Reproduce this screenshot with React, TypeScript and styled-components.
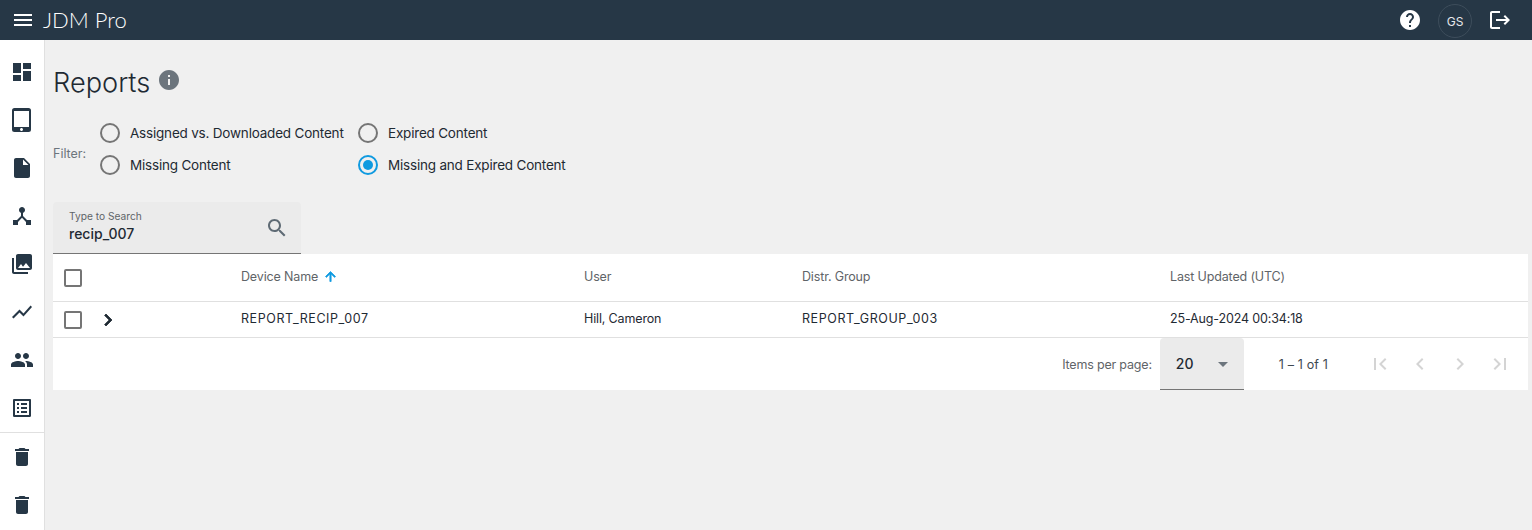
import React from "react";
import styled, { createGlobalStyle } from "styled-components";

const Global = createGlobalStyle`
  html, body { margin: 0; padding: 0; height: 100%; background: #f0f0f0; }
  body { font-family: Inter, "Liberation Sans", sans-serif; color: #1f2a33; overflow: hidden; }
  * { box-sizing: border-box; }
`;

const P = {
  menu: "M3 18h18v-2H3v2zm0-5h18v-2H3v2zm0-7v2h18V6H3z",
  dashboard: "M3 13h8V3H3v10zm0 8h8v-6H3v6zm10 0h8V11h-8v10zm0-18v6h8V3h-8z",
  tablet: "M18.5 0h-14A2.5 2.5 0 0 0 2 2.5v19A2.5 2.5 0 0 0 4.5 24h14a2.5 2.5 0 0 0 2.5-2.5v-19A2.5 2.5 0 0 0 18.5 0zm-7 23c-.83 0-1.5-.67-1.5-1.5s.67-1.5 1.5-1.5 1.5.67 1.5 1.5-.67 1.5-1.5 1.5zm7.5-4H4V3h15v16z",
  file: "M6 2c-1.1 0-1.99.9-1.99 2L4 20c0 1.1.89 2 1.99 2H18c1.1 0 2-.9 2-2V8l-6-6H6zm7 7V3.5L18.5 9H13z",
  hub: "M17 16l-4-4V8.82C14.16 8.4 15 7.3 15 6c0-1.66-1.34-3-3-3S9 4.34 9 6c0 1.3.84 2.4 2 2.82V12l-4 4H3v5h5v-3.05l4-4.2 4 4.2V21h5v-5h-4z",
  collections: "M22 16V4c0-1.1-.9-2-2-2H8c-1.1 0-2 .9-2 2v12c0 1.1.9 2 2 2h12c1.1 0 2-.9 2-2zm-11-4l2.03 2.71L16 11l4 5H8l3-4zM2 6v14c0 1.1.9 2 2 2h14v-2H4V6H2z",
  chart: "M3.5 18.49l6-6.01 4 4L22 6.92l-1.41-1.41-7.09 7.97-4-4L2 16.99z",
  people: "M16 11c1.66 0 2.99-1.34 2.99-3S17.66 5 16 5c-1.66 0-3 1.34-3 3s1.34 3 3 3zm-8 0c1.66 0 2.99-1.34 2.99-3S9.66 5 8 5C6.34 5 5 6.34 5 8s1.34 3 3 3zm0 2c-2.33 0-7 1.17-7 3.5V19h14v-2.5c0-2.33-4.67-3.5-7-3.5zm8 0c-.29 0-.62.02-.97.05 1.16.84 1.97 1.97 1.97 3.45V19h6v-2.5c0-2.33-4.67-3.5-7-3.5z",
  list: "M19 5v14H5V5h14m1.1-2H3.9c-.5 0-.9.4-.9.9v16.2c0 .4.4.9.9.9h16.2c.4 0 .9-.5.9-.9V3.9c0-.5-.5-.9-.9-.9zM11 7h6v2h-6V7zm0 4h6v2h-6v-2zm0 4h6v2h-6zM7 7h2v2H7zm0 4h2v2H7zm0 4h2v2H7z",
  trash: "M6 19c0 1.1.9 2 2 2h8c1.1 0 2-.9 2-2V7H6v12zM19 4h-3.5l-1-1h-5l-1 1H5v2h14V4z",
  help: "M12 2C6.48 2 2 6.48 2 12s4.48 10 10 10 10-4.48 10-10S17.52 2 12 2zm1 17h-2v-2h2v2zm2.07-7.75l-.9.92C13.45 12.9 13 13.5 13 15h-2v-.5c0-1.1.45-2.1 1.17-2.83l1.24-1.26c.37-.36.59-.86.59-1.41 0-1.1-.9-2-2-2s-2 .9-2 2H8c0-2.21 1.79-4 4-4s4 1.79 4 4c0 .88-.36 1.68-.93 2.25z",
  logout: "M17 7l-1.41 1.41L18.17 11H8v2h10.17l-2.58 2.58L17 17l5-5zM4 5h8V3H4c-1.1 0-2 .9-2 2v14c0 1.1.9 2 2 2h8v-2H4V5z",
  info: "M12 2C6.48 2 2 6.48 2 12s4.48 10 10 10 10-4.48 10-10S17.52 2 12 2zm1 15h-2v-6h2v6zm0-8h-2V7h2v2z",
  search: "M15.5 14h-.79l-.28-.27C15.41 12.59 16 11.11 16 9.5 16 5.91 13.09 3 9.5 3S3 5.91 3 9.5 5.91 16 9.5 16c1.61 0 3.09-.59 4.23-1.57l.27.28v.79l5 4.99L20.49 19l-4.99-5zm-6 0C7.01 14 5 11.99 5 9.5S7.01 5 9.5 5 14 7.01 14 9.5 11.99 14 9.5 14z",
  up: "M4 12l1.41 1.41L11 7.83V20h2V7.83l5.58 5.59L20 12l-8-8-8 8z",
  right: "M10 6L8.59 7.41 13.17 12l-4.58 4.59L10 18l6-6z",
  left: "M15.41 7.41L14 6l-6 6 6 6 1.41-1.41L10.83 12z",
  first: "M18.41 16.59L13.82 12l4.59-4.59L17 6l-6 6 6 6zM6 6h2v12H6z",
  last: "M5.59 7.41L10.18 12l-4.59 4.59L7 18l6-6-6-6zM16 6h2v12h-2z",
  caret: "M7 10l5 5 5-5z",
};

const Svg = styled.svg<{ $c?: string; $bold?: number }>`
  display: block;
  flex: none;
  fill: ${(p) => p.$c || "#263746"};
  stroke: ${(p) => (p.$bold ? p.$c : "none")};
  stroke-width: ${(p) => p.$bold || 0};
`;
const Icon = ({ d, size = 24, c, bold }: { d: string; size?: number; c?: string; bold?: number }) => (
  <Svg viewBox="0 0 24 24" width={size} height={size} $c={c} $bold={bold}><path d={d} /></Svg>
);

const Page = styled.div`
  width: 1532px;
  height: 530px;
  display: flex;
  flex-direction: column;
  overflow: hidden;
`;
const Header = styled.header`
  height: 40px;
  flex: none;
  background: #263746;
  color: #fff;
  display: flex;
  align-items: center;
  padding: 0 20px 0 11px;
`;
const Brand = styled.div`
  font-family: Lato, sans-serif;
  font-size: 22px;
  font-weight: 300;
  margin-left: 8px;
  padding-bottom: 2px;
  flex: 1;
`;
const Avatar = styled.div`
  width: 34px;
  height: 34px;
  border-radius: 50%;
  border: 1px solid #3d4d5b;
  display: flex;
  align-items: center;
  justify-content: center;
  font-size: 12px;
  margin: 2px 16px 0 16px;
  color: #e6e9eb;
`;
const Body = styled.div`
  flex: 1;
  display: flex;
  min-height: 0;
`;
const Side = styled.nav`
  width: 45px;
  flex: none;
  background: #fff;
  border-right: 1px solid #e0e0e0;
  padding-top: 8px;
`;
const SideItem = styled.div`
  height: 48px;
  display: flex;
  align-items: center;
  justify-content: center;
`;
const SideRule = styled.div`
  height: 1px;
  background: #e0e0e0;
`;
const Main = styled.main`
  flex: 1;
  min-width: 0;
  padding: 0 4px 0 8px;
`;
const TitleRow = styled.div`
  display: flex;
  align-items: center;
  height: 44px;
  margin-top: 21px;
  gap: 7px;
`;
const Title = styled.h1`
  margin: 0;
  font-size: 27.2px;
  font-weight: 300;
  line-height: 44px;
  color: #1f2a33;
`;
const InfoWrap = styled.div`
  margin-top: -7px;
`;
const FilterRow = styled.div`
  display: flex;
  align-items: center;
  margin-top: 12px;
`;
const FilterLabel = styled.div`
  font-size: 12.5px;
  color: #6c757d;
  width: 47px;
  margin-top: 8px;
`;
const RadioGrid = styled.div`
  display: grid;
  grid-template-columns: 258px auto;
  grid-auto-rows: 32px;
`;
const Radio = styled.label`
  display: flex;
  align-items: center;
  font-size: 13.5px;
  color: #1f2a33;
  letter-spacing: -0.2px;
`;
const Ring = styled.span<{ $on?: boolean }>`
  width: 20px;
  height: 20px;
  border-radius: 50%;
  border: 2px solid ${(p) => (p.$on ? "#0f9ae0" : "#757575")};
  margin-right: 10px;
  display: flex;
  align-items: center;
  justify-content: center;
  &::after {
    content: "";
    display: ${(p) => (p.$on ? "block" : "none")};
    width: 10px;
    height: 10px;
    border-radius: 50%;
    background: #0f9ae0;
  }
`;
const SearchBox = styled.div`
  margin-top: 21px;
  width: 248px;
  height: 52px;
  background: #ebebeb;
  border-radius: 4px 4px 0 0;
  border-bottom: 1px solid #757575;
  padding: 8px 12px 0 16px;
  display: flex;
  justify-content: space-between;
`;
const SearchLabel = styled.div`
  font-size: 10.2px;
  color: #5f6468;
  line-height: 12px;
`;
const SearchValue = styled.div`
  font-size: 14px;
  line-height: 20px;
  margin-top: 2px;
  color: #1f2a33;
  font-weight: 500;
`;
const SearchIcon = styled.div`
  margin-top: 6px;
`;
const Table = styled.section`
  background: #fff;
`;
const Row = styled.div<{ $h: number }>`
  height: ${(p) => p.$h}px;
  display: grid;
  grid-template-columns: 43px 145px 343px 218px 368px 1fr;
  align-items: center;
  border-bottom: 1px solid #e0e0e0;
  font-size: 12.5px;
  letter-spacing: -0.15px;
`;
const Head = styled.div`
  color: #5f6468;
  display: flex;
  align-items: center;
  gap: 5px;
  padding-bottom: 2px;
`;
const Cell = styled.div<{ $caps?: boolean }>`
  color: #1f2a33;
  padding-bottom: 2px;
  letter-spacing: ${(p) => (p.$caps ? "0.58px" : "-0.15px")};
`;
const CheckCell = styled.div`
  padding-left: 11px;
`;
const Check = styled.span`
  display: block;
  width: 18px;
  height: 18px;
  border: 2px solid #757575;
  border-radius: 2px;
`;
const Footer = styled.div`
  height: 52px;
  display: flex;
  align-items: center;
  justify-content: flex-end;
  font-size: 12.5px;
  letter-spacing: -0.05px;
  padding-right: 8px;
`;
const PerPage = styled.span`
  color: #5f6468;
  margin-right: 8px;
  letter-spacing: -0.18px;
`;
const Select = styled.div`
  width: 84px;
  height: 52px;
  background: #ebebeb;
  border-radius: 4px 4px 0 0;
  border-bottom: 1px solid #757575;
  display: flex;
  align-items: center;
  justify-content: space-between;
  padding: 0 9px 0 16px;
  font-size: 14px;
  color: #1f2a33;
  font-weight: 500;
`;
const Range = styled.span`
  color: #3e4850;
  margin: 0 32px 0 35px;
  letter-spacing: 0.15px;
`;
const PageBtn = styled.div`
  width: 40px;
  height: 40px;
  display: flex;
  align-items: center;
  justify-content: center;
`;

const sideTop = [P.dashboard, P.tablet, P.file, P.hub, P.collections, P.chart, P.people, P.list];

export default function App() {
  return (
    <Page>
      <Global />
      <Header>
        <Icon d={P.menu} c="#fff" />
        <Brand>JDM Pro</Brand>
        <Icon d={P.help} c="#fff" />
        <Avatar>GS</Avatar>
        <Icon d={P.logout} c="#fff" />
      </Header>
      <Body>
        <Side>
          {sideTop.map((d) => (
            <SideItem key={d}><Icon d={d} /></SideItem>
          ))}
          <SideRule />
          <SideItem><Icon d={P.trash} /></SideItem>
          <SideItem><Icon d={P.trash} /></SideItem>
        </Side>
        <Main>
          <TitleRow>
            <Title>Reports</Title>
            <InfoWrap><Icon d={P.info} c="#6c757d" /></InfoWrap>
          </TitleRow>
          <FilterRow>
            <FilterLabel>Filter:</FilterLabel>
            <RadioGrid>
              <Radio><Ring />Assigned vs. Downloaded Content</Radio>
              <Radio><Ring />Expired Content</Radio>
              <Radio><Ring />Missing Content</Radio>
              <Radio><Ring $on />Missing and Expired Content</Radio>
            </RadioGrid>
          </FilterRow>
          <SearchBox>
            <div>
              <SearchLabel>Type to Search</SearchLabel>
              <SearchValue>recip_007</SearchValue>
            </div>
            <SearchIcon><Icon d={P.search} c="#5f6b75" /></SearchIcon>
          </SearchBox>
          <Table>
            <Row $h={48}>
              <CheckCell><Check /></CheckCell>
              <span />
              <Head>Device Name <Icon d={P.up} size={15} c="#0f9ae0" bold={1.2} /></Head>
              <Head>User</Head>
              <Head>Distr. Group</Head>
              <Head>Last Updated (UTC)</Head>
            </Row>
            <Row $h={36}>
              <CheckCell><Check /></CheckCell>
              <Icon d={P.right} c="#1f2a33" bold={0.8} />
              <Cell $caps>REPORT_RECIP_007</Cell>
              <Cell>Hill, Cameron</Cell>
              <Cell $caps>REPORT_GROUP_003</Cell>
              <Cell>25-Aug-2024 00:34:18</Cell>
            </Row>
            <Footer>
              <PerPage>Items per page:</PerPage>
              <Select>20<Icon d={P.caret} c="#6c757d" /></Select>
              <Range>1 – 1 of 1</Range>
              <PageBtn><Icon d={P.first} c="#d4d4d4" /></PageBtn>
              <PageBtn><Icon d={P.left} c="#d4d4d4" /></PageBtn>
              <PageBtn><Icon d={P.right} c="#d4d4d4" /></PageBtn>
              <PageBtn><Icon d={P.last} c="#d4d4d4" /></PageBtn>
            </Footer>
          </Table>
        </Main>
      </Body>
    </Page>
  );
}
